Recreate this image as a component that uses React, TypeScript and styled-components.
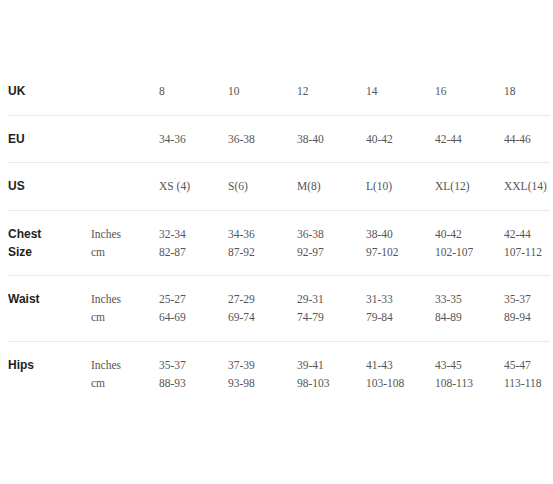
import React from "react"
import styled, { createGlobalStyle } from "styled-components"

/////////////////////////////////////////////////////////////////////////////

const GlobalStyle = createGlobalStyle`
  html, body {
    margin: 0;
    padding: 0;
    background: #ffffff;
    overflow: hidden;
  }
  body {
    padding: 8px;
  }
`

interface RowType {
  label: React.ReactNode
  units?: string[]
  values: string[][]
}

const ROWS: RowType[] = [
  { label: "UK", values: [["8"], ["10"], ["12"], ["14"], ["16"], ["18"]] },
  {
    label: "EU",
    values: [["34-36"], ["36-38"], ["38-40"], ["40-42"], ["42-44"], ["44-46"]],
  },
  {
    label: "US",
    values: [["XS (4)"], ["S(6)"], ["M(8)"], ["L(10)"], ["XL(12)"], ["XXL(14)"]],
  },
  {
    label: (
      <>
        Chest
        <br />
        Size
      </>
    ),
    units: ["Inches", "cm"],
    values: [
      ["32-34", "82-87"],
      ["34-36", "87-92"],
      ["36-38", "92-97"],
      ["38-40", "97-102"],
      ["40-42", "102-107"],
      ["42-44", "107-112"],
    ],
  },
  {
    label: "Waist",
    units: ["Inches", "cm"],
    values: [
      ["25-27", "64-69"],
      ["27-29", "69-74"],
      ["29-31", "74-79"],
      ["31-33", "79-84"],
      ["33-35", "84-89"],
      ["35-37", "89-94"],
    ],
  },
  {
    label: "Hips",
    units: ["Inches", "cm"],
    values: [
      ["35-37", "88-93"],
      ["37-39", "93-98"],
      ["39-41", "98-103"],
      ["41-43", "103-108"],
      ["43-45", "108-113"],
      ["45-47", "113-118"],
    ],
  },
]

const App: React.FC = () => {
  return (
    <>
      <GlobalStyle />
      <Table>
        {ROWS.map((row, i) => (
          <Row key={i} last={i === ROWS.length - 1}>
            <Label>{row.label}</Label>
            <Cell>
              {(row.units || []).map((u) => (
                <div key={u}>{u}</div>
              ))}
            </Cell>
            {row.values.map((v, j) => (
              <Cell key={j}>
                {v.map((line) => (
                  <div key={line}>{line}</div>
                ))}
              </Cell>
            ))}
          </Row>
        ))}
      </Table>
    </>
  )
}

/////////////////////////////////////////////////////////////////////////////

const Table = styled.div`
  width: 542px;
  margin-top: 60px;
  display: grid;
`

const Row = styled.div<{ last?: boolean }>`
  display: grid;
  grid-template-columns: 83px 68px repeat(5, 69px) 1fr;
  padding: 14px 0 14.5px;
  border-bottom: 1px solid ${(p) => (p.last ? "transparent" : "#e9e9e9")};
  line-height: 18px;
`

const Label = styled.div`
  font-family: "Liberation Sans", Arial, sans-serif;
  font-weight: bold;
  font-size: 12px;
  color: #1e1e1e;
`

const Cell = styled.div`
  font-family: "Liberation Serif", "Times New Roman", serif;
  font-size: 11.5px;
  color: #555555;
  white-space: nowrap;
`

export default App
